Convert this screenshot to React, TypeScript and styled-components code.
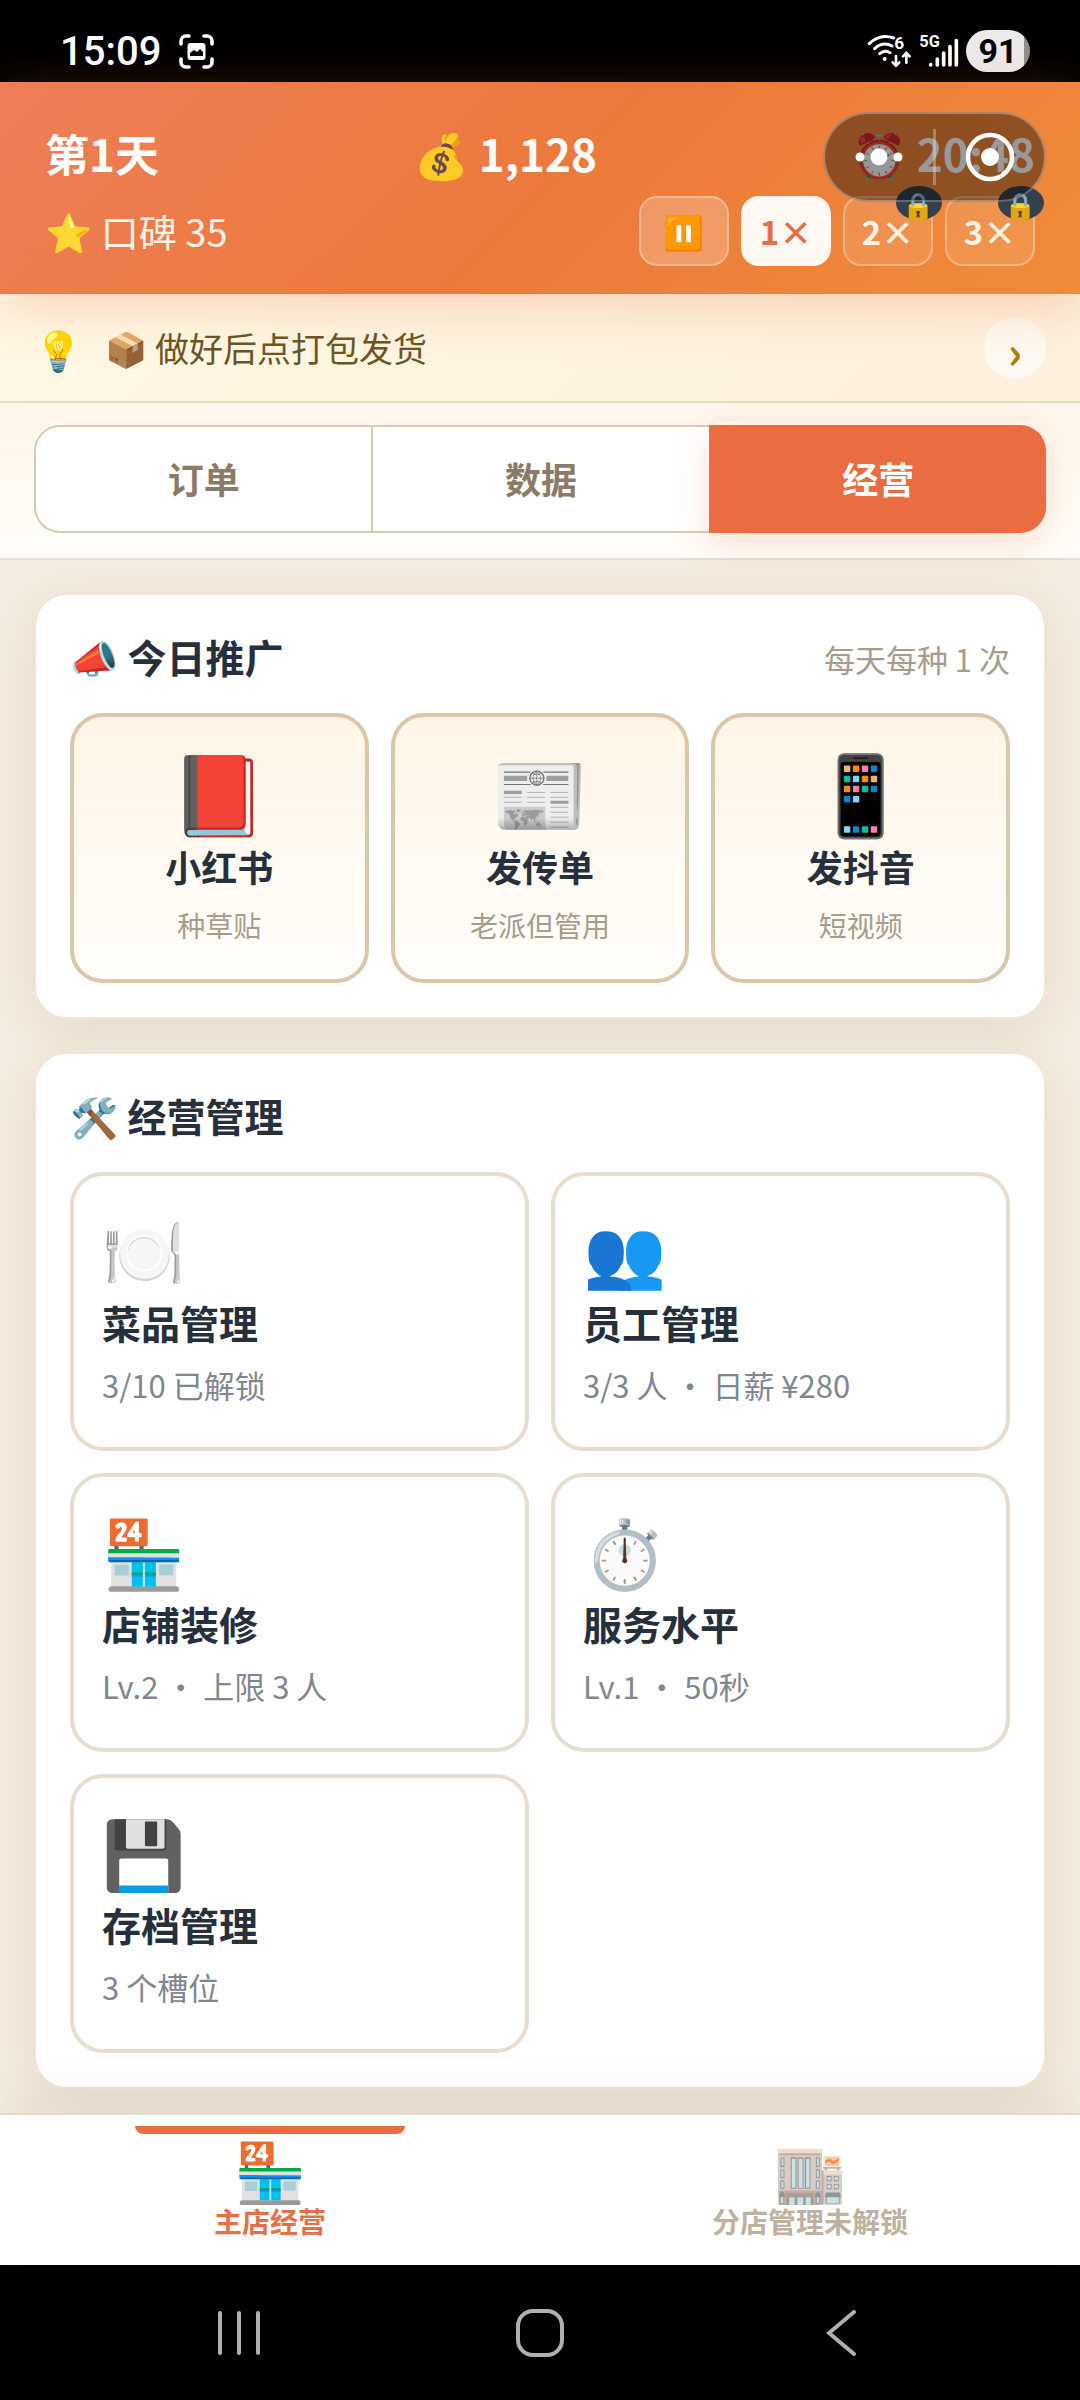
import React from "react";
import styled, { createGlobalStyle } from "styled-components";

const GlobalStyle = createGlobalStyle`
  * { box-sizing: border-box; }
  body {
    margin: 0;
    background: #000;
    font-family: "Noto Sans CJK SC", "Noto Color Emoji", sans-serif;
  }
  button { font-family: inherit; cursor: pointer; }
`;

const Screen = styled.div`
  min-height: 100vh;
  display: flex;
  flex-direction: column;
  background: #f5ede1;
`;

const StatusBar = styled.div`
  height: 82px;
  padding: 20px 50px 0 60px;
  display: flex;
  align-items: center;
  justify-content: space-between;
  background: #000;
  color: #fff;
  font-family: Roboto, sans-serif;
`;

const StatusGroup = styled.div`
  display: flex;
  align-items: center;
  gap: 7px;
`;

const Clock = styled.span`
  margin-right: 11px;
  font-size: 40px;
  font-weight: 500;
`;

const Battery = styled.span`
  width: 64px;
  height: 42px;
  border-radius: 21px;
  background: linear-gradient(90deg, #ebebeb 90%, #8f8f8f 90%);
  color: #000;
  font-size: 34px;
  font-weight: 700;
  line-height: 43px;
  text-align: center;
`;

const Header = styled.header`
  position: relative;
  z-index: 2;
  padding: 38px 45px 28px;
  background: linear-gradient(135deg, #ed7e58 0%, #ec793c 50%, #f08c38 100%);
  box-shadow: 0 12px 48px rgba(235, 115, 60, 0.28);
  color: #fff;
`;

const HeaderRow = styled.div`
  display: flex;
  align-items: flex-end;
  justify-content: space-between;
`;

const Stat = styled.span`
  font-size: 44px;
  font-weight: 700;
  line-height: 66px;
`;

const Reputation = styled.span`
  font-size: 38px;
  line-height: 70px;
  color: #fff3e6;
`;

const Speeds = styled.div`
  display: flex;
  gap: 12px;
  margin-top: 10px;
`;

const SpeedButton = styled.button<{ $active?: boolean; $strong?: boolean }>`
  position: relative;
  width: 90px;
  height: 70px;
  padding: 0;
  border: 2px solid ${({ $active }) => ($active ? "#fff7f2" : "rgba(255, 255, 255, 0.3)")};
  border-radius: 18px;
  background: ${({ $active, $strong }) =>
    $active ? "#fff7f2" : $strong ? "rgba(255, 255, 255, 0.22)" : "rgba(255, 255, 255, 0.1)"};
  color: ${({ $active }) => ($active ? "#e56f45" : "#fff3e6")};
  font-size: 33px;
  font-weight: 700;
`;

const LockBadge = styled.span`
  position: absolute;
  top: -12px;
  right: -11px;
  width: 46px;
  height: 34px;
  border-radius: 50%;
  background: #34404f;
  font-size: 26px;
  line-height: 36px;
`;

// floating mini-program control, sits over the clock
const Capsule = styled.div`
  position: absolute;
  top: 30px;
  right: 34px;
  width: 223px;
  height: 90px;
  display: flex;
  align-items: center;
  border: 2px solid rgba(255, 255, 255, 0.3);
  border-radius: 45px;
  background: rgba(0, 0, 0, 0.4);
`;

const CapsuleButton = styled.button`
  flex: 1;
  height: 56px;
  padding: 0;
  display: flex;
  align-items: center;
  justify-content: center;
  border: 0;
  background: none;

  & + & {
    border-left: 3px solid rgba(255, 255, 255, 0.3);
  }
`;

const Hint = styled.section`
  height: 109px;
  padding: 0 34px;
  display: flex;
  align-items: center;
  border-bottom: 2px solid #e6dabf;
  background: linear-gradient(135deg, #fff8e4, #fdf0dc);
  color: #6b5423;
  font-size: 34px;
`;

const HintIcon = styled.span`
  width: 71px;
  font-size: 39px;
`;

const HintText = styled.span`
  flex: 1;
`;

const HintMore = styled.button`
  width: 62px;
  height: 62px;
  padding: 0;
  border: 0;
  border-radius: 50%;
  background: rgba(255, 255, 255, 0.6);
  color: #b07d10;
  font-size: 44px;
  font-weight: 700;
  line-height: 66px;
`;

const TabsWrap = styled.nav`
  padding: 22px 34px 25px;
  border-bottom: 2px solid #e6dbd0;
  background: linear-gradient(#fff5e8, #fffefb);
`;

const Tabs = styled.div`
  display: flex;
`;

const Tab = styled.button<{ $active?: boolean }>`
  flex: 1;
  height: 108px;
  padding: 0 0 2px;
  border: 2px solid #d8cab2;
  border-right-width: 0;
  background: #fff;
  color: #8b7a66;
  font-size: 36px;
  font-weight: 700;

  &:first-child {
    border-radius: 26px 0 0 26px;
  }

  &:last-child {
    border-radius: 0 26px 26px 0;
  }

  ${({ $active }) =>
    $active &&
    `
    border-color: #e96d40;
    background: #e96d40;
    color: #fff;
    box-shadow: 0 12px 36px rgba(233, 109, 64, 0.2);
  `}
`;

const Content = styled.main`
  flex: 1;
  padding: 33px 34px 24px;
  display: flex;
  flex-direction: column;
  gap: 33px;
`;

const Panel = styled.section`
  padding: 34px;
  border: 2px solid #efe5d9;
  border-radius: 33px;
  background: #fff;
  box-shadow: 0 12px 48px rgba(120, 90, 50, 0.12);
`;

const PanelHead = styled.div`
  height: 60px;
  margin-bottom: 24px;
  display: flex;
  justify-content: space-between;
`;

const PanelTitle = styled.h2`
  margin: 0;
  color: #262f3c;
  font-size: 39px;
  font-weight: 700;
  line-height: 54px;
`;

const PanelNote = styled.span`
  color: #a89b8a;
  font-size: 31px;
  line-height: 60px;
`;

const Grid = styled.div<{ $cols: number }>`
  display: grid;
  grid-template-columns: repeat(${({ $cols }) => $cols}, 1fr);
  gap: 22px;
`;

const PromoCard = styled.button`
  height: 270px;
  padding: 31px 0 0;
  display: flex;
  flex-direction: column;
  align-items: center;
  border: 4px solid #dbc6aa;
  border-radius: 33px;
  background: linear-gradient(#fff4e6, #fffefb);
`;

const ManageCard = styled.button`
  height: 279px;
  padding: 28px 28px 0;
  display: flex;
  flex-direction: column;
  align-items: flex-start;
  border: 4px solid #e6dccf;
  border-radius: 33px;
  background: #fff;
`;

const CardIcon = styled.span<{ $size: number }>`
  height: 90px;
  font-size: ${({ $size }) => $size}px;
  line-height: ${({ $size }) => ($size > 70 ? 82 : 88)}px;
`;

const CardName = styled.span<{ $size: number }>`
  color: #262f3c;
  font-size: ${({ $size }) => $size}px;
  font-weight: 700;
  line-height: 56px;
`;

const CardNote = styled.span<{ $promo?: boolean }>`
  margin-top: ${({ $promo }) => ($promo ? 3 : 7)}px;
  color: ${({ $promo }) => ($promo ? "#a89b8a" : "#7f8690")};
  font-size: ${({ $promo }) => ($promo ? 28 : 31)}px;
  line-height: 56px;
`;

const BottomNav = styled.nav`
  position: relative;
  height: 152px;
  display: flex;
  border-top: 2px solid #e4dbcf;
  background: #fff;
  box-shadow: 0 -12px 48px rgba(80, 60, 30, 0.08);
`;

const NavItem = styled.button<{ $active?: boolean }>`
  flex: 1;
  padding: 11px 0 0;
  display: flex;
  flex-direction: column;
  align-items: center;
  border: 0;
  background: none;
  color: ${({ $active }) => ($active ? "#e4704a" : "#beb1a0")};
  font-size: 28px;
  font-weight: 700;
  line-height: 26px;

  &::before {
    content: "";
    width: 50%;
    height: 8px;
    border-radius: 0 0 8px 8px;
    background: ${({ $active }) => ($active ? "#e96d40" : "transparent")};
  }
`;

const NavIcon = styled.span<{ $dim?: boolean }>`
  height: 70px;
  margin-top: 4px;
  font-family: "Noto Color Emoji", sans-serif;
  font-size: 58px;
  font-weight: 400;
  line-height: 70px;
  opacity: ${({ $dim }) => ($dim ? 0.6 : 1)};
`;

const SystemBar = styled.footer`
  height: 135px;
  padding: 0 88px;
  display: flex;
  background: #000;
`;

const SystemButton = styled.button`
  flex: 1;
  padding: 0;
  display: flex;
  align-items: center;
  justify-content: center;
  border: 0;
  background: none;
`;

const CaptureIcon = () => (
  <svg width="35" height="35" viewBox="0 0 35 35" fill="none" aria-hidden="true">
    <path
      d="M2 10V7a5 5 0 0 1 5-5h3M25 2h3a5 5 0 0 1 5 5v3M33 25v3a5 5 0 0 1-5 5h-3M10 33H7a5 5 0 0 1-5-5v-3"
      stroke="#fff"
      strokeWidth="3.6"
      strokeLinecap="round"
    />
    <rect x="8.5" y="9" width="18" height="17" rx="3" fill="#fff" />
    <path d="M11 22v-3l4-3 3 2 3-3 3 3v4z" fill="#000" />
  </svg>
);

const WifiIcon = () => (
  <svg width="45" height="39" viewBox="50 36 135 117" fill="none" stroke="#fff" strokeLinecap="round" aria-hidden="true">
    <path d="M57 71Q88 40 130 54M73 86Q98 63 125 78M88 101Q104 88 119 98" strokeWidth="9" />
    <circle cx="103" cy="117" r="6" fill="#fff" stroke="none" />
    <path d="M137 108v28M127 127l10 10 10-10M168 128v-28M158 109l10-10 10 10" strokeWidth="8" />
    <text x="132" y="87" fill="#fff" stroke="none" fontSize="52" fontWeight="700">6</text>
  </svg>
);

const SignalIcon = () => (
  <svg width="40" height="43" viewBox="205 30 120 129" aria-hidden="true">
    <text x="206" y="82" fill="#fff" fontSize="49" fontWeight="700">5G</text>
    <path
      d="M240 134v1M260 117v18M279 99v36M298 80v55M317 62v73"
      stroke="#fff"
      strokeWidth="11"
      strokeLinecap="round"
    />
  </svg>
);

const MoreDots = () => (
  <svg width="48" height="18" viewBox="0 0 48 18" fill="#fff" aria-hidden="true">
    <circle cx="5" cy="9" r="4.5" />
    <circle cx="24" cy="9" r="8.5" />
    <circle cx="43" cy="9" r="4.5" />
  </svg>
);

const CloseRing = () => (
  <svg width="50" height="50" viewBox="0 0 50 50" fill="none" aria-hidden="true">
    <circle cx="25" cy="25" r="22" stroke="#fff" strokeWidth="4.5" />
    <circle cx="25" cy="25" r="9" fill="#fff" />
  </svg>
);

const promos = [
  { icon: "📕", name: "小红书", note: "种草贴" },
  { icon: "📰", name: "发传单", note: "老派但管用" },
  { icon: "📱", name: "发抖音", note: "短视频" },
];

const managers = [
  { icon: "🍽️", name: "菜品管理", note: "3/10 已解锁" },
  { icon: "👥", name: "员工管理", note: "3/3 人 · 日薪 ¥280" },
  { icon: "🏪", name: "店铺装修", note: "Lv.2 · 上限 3 人" },
  { icon: "⏱️", name: "服务水平", note: "Lv.1 · 50秒" },
  { icon: "💾", name: "存档管理", note: "3 个槽位" },
];

const App: React.FC = () => {
  return (
    <>
      <GlobalStyle />
      <Screen>
        <StatusBar>
          <StatusGroup>
            <Clock>15:09</Clock>
            <CaptureIcon />
          </StatusGroup>
          <StatusGroup>
            <WifiIcon />
            <SignalIcon />
            <Battery>91</Battery>
          </StatusGroup>
        </StatusBar>

        <Header>
          <HeaderRow>
            <Stat>第1天</Stat>
            <Stat>💰 1,128</Stat>
            <Stat>⏰ 20:48</Stat>
          </HeaderRow>
          <HeaderRow>
            <Reputation>⭐ 口碑 35</Reputation>
            <Speeds>
              <SpeedButton type="button" aria-label="暂停" $strong>⏸️</SpeedButton>
              <SpeedButton type="button" $active>1×</SpeedButton>
              <SpeedButton type="button">
                2×<LockBadge>🔒</LockBadge>
              </SpeedButton>
              <SpeedButton type="button">
                3×<LockBadge>🔒</LockBadge>
              </SpeedButton>
            </Speeds>
          </HeaderRow>
          <Capsule>
            <CapsuleButton type="button" aria-label="更多">
              <MoreDots />
            </CapsuleButton>
            <CapsuleButton type="button" aria-label="关闭">
              <CloseRing />
            </CapsuleButton>
          </Capsule>
        </Header>

        <Hint>
          <HintIcon>💡</HintIcon>
          <HintText>📦 做好后点打包发货</HintText>
          <HintMore type="button">›</HintMore>
        </Hint>

        <TabsWrap>
          <Tabs>
            <Tab type="button">订单</Tab>
            <Tab type="button">数据</Tab>
            <Tab type="button" $active>经营</Tab>
          </Tabs>
        </TabsWrap>

        <Content>
          <Panel>
            <PanelHead>
              <PanelTitle>📣 今日推广</PanelTitle>
              <PanelNote>每天每种 1 次</PanelNote>
            </PanelHead>
            <Grid $cols={3}>
              {promos.map((p) => (
                <PromoCard key={p.name} type="button">
                  <CardIcon $size={78}>{p.icon}</CardIcon>
                  <CardName $size={36}>{p.name}</CardName>
                  <CardNote $promo>{p.note}</CardNote>
                </PromoCard>
              ))}
            </Grid>
          </Panel>

          <Panel>
            <PanelHead>
              <PanelTitle>🛠️ 经营管理</PanelTitle>
            </PanelHead>
            <Grid $cols={2}>
              {managers.map((m) => (
                <ManageCard key={m.name} type="button">
                  <CardIcon $size={67}>{m.icon}</CardIcon>
                  <CardName $size={39}>{m.name}</CardName>
                  <CardNote>{m.note}</CardNote>
                </ManageCard>
              ))}
            </Grid>
          </Panel>
        </Content>

        <BottomNav>
          <NavItem type="button" $active>
            <NavIcon>🏪</NavIcon>
            主店经营
          </NavItem>
          <NavItem type="button">
            <NavIcon $dim>🏬</NavIcon>
            分店管理未解锁
          </NavItem>
        </BottomNav>

        <SystemBar>
          <SystemButton type="button" aria-label="最近任务">
            <svg width="42" height="46" viewBox="0 0 42 46" stroke="#b0b0b0" strokeWidth="4" strokeLinecap="round">
              <path d="M2 3v40M21 3v40M40 3v40" />
            </svg>
          </SystemButton>
          <SystemButton type="button" aria-label="主屏幕">
            <svg width="48" height="48" viewBox="0 0 48 48" fill="none" stroke="#b0b0b0" strokeWidth="4">
              <rect x="2" y="2" width="44" height="44" rx="15" />
            </svg>
          </SystemButton>
          <SystemButton type="button" aria-label="返回">
            <svg width="30" height="46" viewBox="0 0 30 46" fill="none" stroke="#b0b0b0" strokeWidth="4" strokeLinecap="round">
              <path d="M28 2L3 23l25 21" />
            </svg>
          </SystemButton>
        </SystemBar>
      </Screen>
    </>
  );
};

export default App;
